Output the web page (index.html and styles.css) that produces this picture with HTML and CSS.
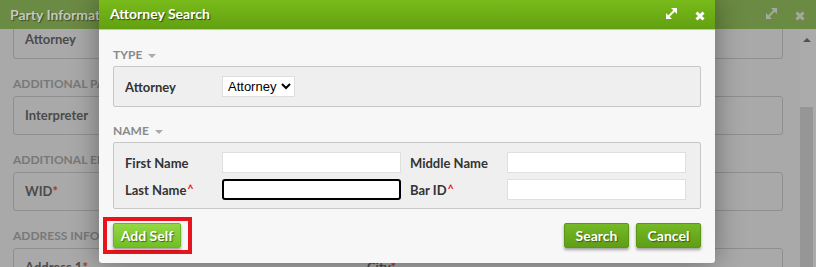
FILE: index.html
```html
<!DOCTYPE html>
<html>
<head>
<meta charset="utf-8">
<link rel="stylesheet" href="styles.css">
</head>
<body>
<div class="page">
  <div class="page-header">
    <span class="page-title">Party Information</span>
    <span class="head-icons dim">
      <svg class="ico-expand" width="13" height="13" viewBox="0 0 13 13"><line x1="2.5" y1="10.5" x2="10.5" y2="2.5" stroke="currentColor" stroke-width="2"/><polygon points="6,1 12,1 12,7" fill="currentColor"/><polygon points="1,6 1,12 7,12" fill="currentColor"/></svg>
      <svg class="ico-close" width="10" height="10" viewBox="0 0 10 10"><path d="M1.5 1.5 L8.5 8.5 M8.5 1.5 L1.5 8.5" stroke="currentColor" stroke-width="3"/></svg>
    </span>
  </div>
  <div class="page-main">
    <div class="content">
      <div class="content-inner">
        <div class="pbox"><span class="ptext">Attorney</span></div>
        <div class="plabel">ADDITIONAL PARTY INFORMATION</div>
        <div class="pbox"><span class="ptext">Interpreter</span></div>
        <div class="plabel">ADDITIONAL EMPLOYER INFORMATION</div>
        <div class="pbox"><span class="ptext">WID<span class="req">*</span></span></div>
        <div class="plabel">ADDRESS INFORMATION</div>
        <div class="pbox two"><span class="ptext col1">Address 1<span class="req">*</span></span><span class="ptext">City<span class="req">*</span></span></div>
      </div>
    </div>
    <div class="scrollbar">
      <span class="sb-arrow"></span>
      <span class="sb-thumb"></span>
    </div>
  </div>
</div>

<div class="modal">
  <div class="modal-header">
    <span class="modal-title">Attorney Search</span>
    <span class="head-icons">
      <svg class="ico-expand" width="13" height="13" viewBox="0 0 13 13"><line x1="2.5" y1="10.5" x2="10.5" y2="2.5" stroke="currentColor" stroke-width="2"/><polygon points="6,1 12,1 12,7" fill="currentColor"/><polygon points="1,6 1,12 7,12" fill="currentColor"/></svg>
      <svg class="ico-close" width="10" height="10" viewBox="0 0 10 10"><path d="M1.5 1.5 L8.5 8.5 M8.5 1.5 L1.5 8.5" stroke="currentColor" stroke-width="3"/></svg>
    </span>
  </div>
  <div class="modal-body">
    <div class="sec-label">TYPE <span class="tri"></span></div>
    <div class="fbox type-box">
      <span class="flabel">Attorney</span>
      <select class="fselect"><option>Attorney</option></select>
    </div>
    <div class="sec-label second">NAME <span class="tri"></span></div>
    <div class="fbox name-grid">
      <span class="flabel">First Name</span>
      <input class="finput" type="text">
      <span class="flabel col3">Middle Name</span>
      <input class="finput" type="text">
      <span class="flabel">Last Name<span class="caret">^</span></span>
      <input class="finput focused" type="text">
      <span class="flabel col3">Bar ID<span class="caret">^</span></span>
      <input class="finput" type="text">
    </div>
    <div class="actions">
      <span class="highlight"><button class="btn btn-light">Add Self</button></span>
      <span class="spacer"></span>
      <button class="btn">Search</button>
      <button class="btn">Cancel</button>
    </div>
  </div>
</div>
</body>
</html>
```

FILE: styles.css
```css
* { box-sizing: border-box; }
html, body { margin: 0; padding: 0; }
body {
  width: 816px;
  height: 267px;
  overflow: hidden;
  position: relative;
  background: #a9a9a9;
  font-family: Lato, "Liberation Sans", sans-serif;
}

/* background page (dimmed) */
.page { display: flex; flex-direction: column; height: 267px; }
.page-header {
  height: 29px;
  flex: none;
  background: #6b8a43;
  display: flex;
  align-items: center;
  padding: 0 11px 0 10px;
  position: relative;
  z-index: 1;
}
.page-title {
  color: #c4c8be;
  font-weight: 700;
  font-size: 14px;
  text-shadow: 1px 1px 1px rgba(0,0,0,0.45);
}
.head-icons { margin-left: auto; display: flex; align-items: center; gap: 17px; color: #fff; }
.head-icons.dim { color: #a4a89f; gap: 17px; }
.ico-expand { display: block; margin-top: -2px; }
.ico-close { display: block; margin-top: 2px; }

.page-main { flex: 1; display: flex; min-height: 0; }
.content { flex: 1; overflow: hidden; padding: 0 17px 0 13px; }
.content-inner { margin-top: -9px; }
.pbox {
  height: 39px;
  border: 1px solid #8f8f8f;
  border-radius: 3px;
  padding: 10px 11px 0;
  display: flex;
}
.ptext { color: #4b4b4b; font-weight: 700; font-size: 13px; line-height: 16px; }
.col1 { width: 342px; }
.req { color: #b3322e; }
.plabel {
  color: #787878;
  font-weight: 700;
  font-size: 12px;
  line-height: 14px;
  margin: 18px 0 5px;
  white-space: nowrap;
}
.scrollbar {
  width: 16px;
  flex: none;
  display: flex;
  flex-direction: column;
  align-items: flex-start;
  background: #ababab;
}
.sb-arrow {
  margin: 9px 0 0 3px;
  width: 0; height: 0;
  border-left: 4px solid transparent;
  border-right: 4px solid transparent;
  border-bottom: 4px solid #505050;
}
.sb-thumb {
  margin-top: 65px;
  width: 13px;
  flex: 1;
  background: #969696;
}

/* modal */
.modal {
  position: absolute;
  left: 99px;
  top: 0;
  width: 616px;
  height: 263px;
  background: #f7f7f7;
  box-shadow: 0 0 28px rgba(0,0,0,0.38);
  border-radius: 0 0 3px 3px;
  z-index: 5;
}
.modal-header {
  height: 30px;
  background: linear-gradient(#79bb1b, #62a011);
  border-bottom: 1px solid #c3c3c3;
  display: flex;
  align-items: center;
  padding: 0 10px 0 11px;
}
.modal-title {
  color: #fff;
  font-weight: 700;
  font-size: 14px;
  text-shadow: 1px 1px 1px rgba(0,0,0,0.6);
  margin-top: -2px;
}
.modal-body { padding: 18px 14px 0; }
.sec-label {
  color: #8a8a8a;
  font-weight: 700;
  font-size: 12px;
  line-height: 14px;
  margin-bottom: 4px;
  display: flex;
  align-items: center;
  gap: 6px;
}
.sec-label.second { margin-top: 17px; }
.tri {
  width: 0; height: 0;
  border-left: 4px solid transparent;
  border-right: 4px solid transparent;
  border-top: 4px solid #aaaaaa;
  margin-top: 1px;
}
.fbox {
  background: #efefef;
  border: 1px solid #c7c7c7;
  border-radius: 2px;
  padding: 9px 11px 9px;
}
.type-box { display: flex; align-items: center; height: 41px; }
.flabel {
  color: #333;
  font-weight: 700;
  font-size: 13px;
  line-height: 16px;
  white-space: nowrap;
}
.type-box .flabel { width: 97px; }
.caret { color: #e3141b; font-size: 11px; vertical-align: 2px; margin-left: 1px; }
.fselect {
  width: 73px;
  height: 21px;
  font-family: "Liberation Sans", Arial, sans-serif;
  font-size: 13px;
  color: #000;
  background: #fff;
  border: 1px solid #dedede;
  border-radius: 0;
  padding: 0 1px;
  margin: 0;
}
.name-grid {
  display: grid;
  grid-template-columns: 97px 179px 106px 179px;
  row-gap: 6px;
  align-items: center;
  padding: 9px 11px 8px;
  height: 67px;
}
.col3 { padding-left: 9px; }
.finput {
  height: 21px;
  width: 179px;
  margin: 0;
  background: #fff;
  border: 1px solid #dfdfdf;
  border-radius: 0;
  padding: 0 4px;
  font-family: "Liberation Sans", Arial, sans-serif;
  font-size: 13px;
  outline: none;
}
.finput.focused { border: 2px solid #000; border-radius: 3px; }

.actions {
  display: flex;
  align-items: center;
  margin-top: 8px;
  gap: 7px;
}
.spacer { flex: 1; }
.highlight {
  display: inline-block;
  border: 4px solid #e8131d;
  padding: 2px 7px 2px 6px;
  margin-left: -10px;
  margin-right: -7px;
}
.btn {
  display: block;
  height: 25px;
  width: 65px;
  margin: 0;
  padding: 0;
  border: 1px solid #5b9715;
  border-radius: 2px;
  background: linear-gradient(#75b926, #5f9e16);
  color: #fff;
  font-family: Lato, "Liberation Sans", sans-serif;
  font-weight: 700;
  font-size: 14px;
  text-shadow: 1px 1px 1px rgba(40,60,0,0.7);
  box-shadow: 0 2px 3px rgba(0,0,0,0.35);
}
.btn-light {
  width: 68px;
  border-color: #6fb425;
  background: linear-gradient(#94d846, #71bf24);
}
```
